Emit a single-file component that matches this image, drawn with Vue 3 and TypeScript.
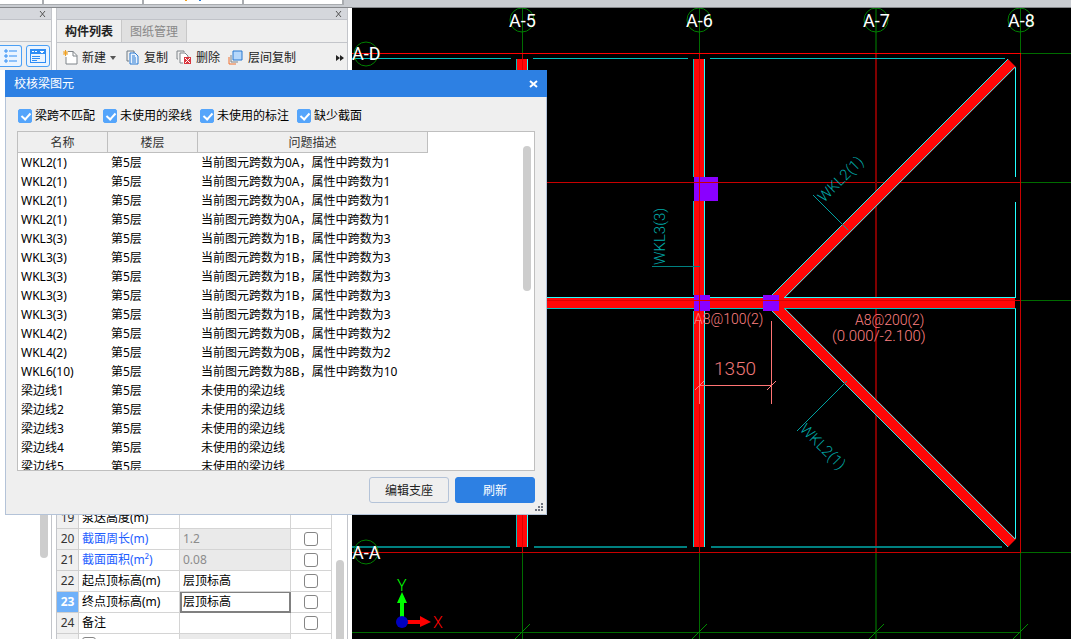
<script setup lang="ts">
import { ref } from 'vue'

interface Filter { label: string; on: boolean }
interface Issue { name: string; floor: string; desc: string }
interface Prop { no: number; name: string; value: string; link?: boolean; readonly?: boolean; tick?: boolean; active?: boolean }
type Bar = [x: number, y: number, w: number, h: number, tone: string]

const filters = ref<Filter[]>([
  { label: '梁跨不匹配', on: true },
  { label: '未使用的梁线', on: true },
  { label: '未使用的标注', on: true },
  { label: '缺少截面', on: true },
])

const span = (name: string, drawn: string, prop: number): Issue => ({
  name, floor: '第5层', desc: `当前图元跨数为${drawn}，属性中跨数为${prop}`,
})
const issues: Issue[] = [
  ...Array.from({ length: 4 }, () => span('WKL2(1)', '0A', 1)),
  ...Array.from({ length: 5 }, () => span('WKL3(3)', '1B', 3)),
  ...Array.from({ length: 2 }, () => span('WKL4(2)', '0B', 2)),
  span('WKL6(10)', '8B', 10),
  ...[1, 2, 3, 4, 5].map((n) => ({ name: `梁边线${n}`, floor: '第5层', desc: '未使用的梁边线' })),
]

const props = ref<Prop[]>([
  { no: 19, name: '泵送高度(m)', value: '' },
  { no: 20, name: '截面周长(m)', value: '1.2', link: true, readonly: true, tick: true },
  { no: 21, name: '截面面积(m²)', value: '0.08', link: true, readonly: true, tick: true },
  { no: 22, name: '起点顶标高(m)', value: '层顶标高', tick: true },
  { no: 23, name: '终点顶标高(m)', value: '层顶标高', tick: true, active: true },
  { no: 24, name: '备注', value: '', tick: true },
])

// Axis grid: green outside the building outline, red inside it
const grid: Bar[] = [
  [352, 53, 669, 1, 'red'], [1021, 53, 2000, 1, 'green'],
  [352, 182, 669, 1, 'brick'], [1021, 182, 2000, 1, 'green'],
  [1021, 300, 2000, 1, 'green'], [1015, 300, 6, 1, 'brick'],
  [352, 552, 669, 1, 'brick'], [1021, 552, 2000, 1, 'green'],
  [352, 632, 669, 1, 'green'],
  [522, 8, 1, 45, 'green'], [522, 54, 1, 498, 'brick'], [522, 553, 1, 2000, 'green'],
  [699, 8, 1, 45, 'green'], [699, 54, 1, 498, 'brick'], [699, 553, 1, 2000, 'green'],
  [875, 8, 2, 45, 'moss'], [875, 54, 2, 498, 'maroon'], [875, 553, 2, 2000, 'moss'],
  [1020, 8, 1, 45, 'green'], [1020, 54, 1, 498, 'brick'], [1020, 553, 1, 2000, 'green'],
]

const edges: Bar[] = [
  [352, 58, 159, 1, 'aqua'], [533, 58, 155, 1, 'aqua'], [710, 58, 295, 1, 'aqua'],
  [352, 546, 158, 2, 'teal'], [534, 546, 153, 2, 'teal'], [711, 546, 291, 2, 'teal'],
  [1015, 67, 1, 110, 'cyan'], [1015, 202, 1, 95, 'cyan'], [1015, 309, 1, 230, 'cyan'],
]

const beams: Bar[] = [
  [516, 59, 1, 488, 'aqua'], [517, 59, 10, 488, 'beam'], [527, 59, 1, 488, 'cyan'],
  [693, 59, 1, 118, 'aqua'], [704, 59, 1, 118, 'cyan'],
  [693, 201, 1, 94, 'aqua'], [704, 201, 1, 94, 'cyan'],
  [693, 311, 1, 236, 'aqua'], [704, 311, 1, 236, 'cyan'],
  [694, 59, 10, 488, 'beam'],
  [546, 297, 148, 1, 'cyan'], [710, 297, 53, 1, 'cyan'], [784, 297, 232, 1, 'cyan'],
  [546, 308, 148, 1, 'aqua'], [710, 308, 53, 1, 'aqua'], [784, 308, 232, 1, 'aqua'],
  [546, 298, 469, 10, 'beam'],
]

const marks: Bar[] = [
  [694, 177, 24, 24, 'violet'], [694, 295, 16, 16, 'violet'], [763, 295, 16, 16, 'violet'],
  [522, 59, 1, 488, 'seam'], [699, 59, 1, 488, 'seam'], [546, 300, 469, 1, 'seam'],
  [694, 182, 24, 1, 'brick'],
  [652, 266, 48, 1, 'teal'],
  [699, 321, 1, 83, 'salmon'], [771, 321, 1, 83, 'salmon'], [699, 385, 73, 1, 'salmon'],
]

const bubbles = [
  { x: 522, y: 20, tx: 509, ty: 27, t: 'A-5' },
  { x: 699, y: 20, tx: 686, ty: 27, t: 'A-6' },
  { x: 876, y: 20, tx: 863, ty: 27, t: 'A-7' },
  { x: 1020, y: 20, tx: 1008, ty: 27, t: 'A-8' },
  { x: 366, y: 54, tx: 352, ty: 60, t: 'A-D' },
  { x: 366, y: 552, tx: 352, ty: 559, t: 'A-A' },
]
const slashes = [522, 699, 876, 1020]
</script>

<template>
  <div class="app">
    <header class="strip">
      <span class="seg first"></span>
      <span class="seg"></span>
      <span class="seg"><i class="dot orange"></i><i class="dot blue"></i></span>
      <span class="seg"></span>
    </header>

    <div class="work">
      <aside class="pane nav">
        <div class="cap"><button class="x" aria-label="×"><svg width="7" height="6" viewBox="0 0 7 6"><path d="M1 0l5 6M6 0L1 6" stroke="#555" /></svg></button></div>
        <div class="blank"></div>
        <div class="modes">
          <button class="mode cut"><svg width="14" height="16" viewBox="0 0 14 16"><g fill="none" stroke="#2f8df5"><path d="M1 2h2v2H1zM1 7h2v2H1zM1 12h2v2H1z" /><path d="M5 3h8M5 8h8M5 13h8" /></g></svg></button>
          <button class="mode"><svg width="16" height="14" viewBox="0 0 16 14"><path d="M0 0h16v14H0z" fill="#2f8df5" /><path d="M1 5h14v8H1z" fill="#eaf4ff" /><path d="M2 2h2v1H2zM5 2h2v1H5zM10 2h4v1h-1v1h-2V3h-1z" fill="#fff" /><path d="M2 7h8v1H2zM2 9h8v1H2zM2 11h5v1H2z" fill="#2f8df5" /></svg></button>
        </div>
        <div class="tree"><span class="thumb"></span></div>
      </aside>

      <aside class="pane parts">
        <div class="cap"><button class="x" aria-label="×"><svg width="7" height="6" viewBox="0 0 7 6"><path d="M1 0l5 6M6 0L1 6" stroke="#555" /></svg></button></div>
        <nav class="tabs">
          <button class="tab on">构件列表</button>
          <button class="tab">图纸管理</button>
        </nav>
        <div class="tools">
          <button class="tool new">
            <svg width="15" height="15" viewBox="0 0 15 15"><path d="M5 1.500h5l4 4v8.500H3V7" fill="#fff" stroke="#7f8489" /><path d="M10 1v5h4" fill="none" stroke="#7f8489" /><path d="M0 3h5M2.500 0v6M0.500 1l4 4M4.500 1l-4 4" stroke="#f0a020" /></svg>
            <span>新建</span>
            <svg width="6" height="4" viewBox="0 0 6 4"><path d="M0 0h6L3 4z" fill="#555" /></svg>
          </button>
          <button class="tool">
            <svg width="13" height="15" viewBox="0 0 13 15"><path d="M3 11H1V1h7v2" fill="none" stroke="#6f7a85" /><path d="M4 3h5l3 3v8H4z" fill="#e8f3ff" stroke="#2878d0" /><path d="M6 6h3M6 8h4M6 10h4M6 12h4" stroke="#2878d0" /></svg>
            <span>复制</span>
          </button>
          <button class="tool">
            <svg width="15" height="15" viewBox="0 0 15 15"><path d="M2 9H1V1h7v1" fill="none" stroke="#7f8489" /><path d="M7 13H4V3h5l3 3v1" fill="#fff" stroke="#7f8489" /><path d="M8 7h7v7H8z" fill="#d9363e" /><path d="M9 8l5 5M14 8l-5 5" stroke="#fff" /></svg>
            <span>删除</span>
          </button>
          <button class="tool layer">
            <svg width="15" height="15" viewBox="0 0 15 15"><path d="M5 1h9v9H5z" fill="#b5d7fb" stroke="#2878d0" /><path d="M3 5v7h7" fill="none" stroke="#7f8489" /><path d="M1 7v7h7" fill="none" stroke="#f07030" /></svg>
            <span>层间复制</span>
          </button>
          <button class="more" aria-label="»"><svg width="8" height="6" viewBox="0 0 8 6"><path d="M0 0l4 3-4 3zM4 0l4 3-4 3z" fill="#222" /></svg></button>
        </div>
        <div class="list"></div>
        <div class="sheet">
          <table class="props">
            <colgroup><col class="p1" /><col class="p2" /><col class="p3" /><col class="p4" /></colgroup>
            <tbody>
              <tr v-for="p in props" :key="p.no" :class="{ active: p.active }">
                <th scope="row">{{ p.no }}</th>
                <td :id="'prop-' + p.no" :class="{ link: p.link }">{{ p.name }}</td>
                <td class="val" :class="{ ro: p.readonly }">
                  <input v-model="p.value" type="text" :readonly="p.readonly" :aria-labelledby="'prop-' + p.no" />
                </td>
                <td class="tick"><input v-if="p.tick" type="checkbox" :aria-labelledby="'prop-' + p.no" /></td>
              </tr>
              <tr>
                <th></th>
                <td class="sub"><input type="checkbox" aria-label="+" /></td>
                <td class="val ro"></td>
                <td></td>
              </tr>
            </tbody>
          </table>
          <span class="thumb"></span>
        </div>
      </aside>

      <main class="canvas">
        <svg class="cad" viewBox="352 8 719 631" preserveAspectRatio="xMinYMin slice">
          <rect v-for="(b, i) in grid" :key="'g' + i" :x="b[0]" :y="b[1]" :width="b[2]" :height="b[3]" :class="b[4]" />
          <rect v-for="(b, i) in edges" :key="'e' + i" :x="b[0]" :y="b[1]" :width="b[2]" :height="b[3]" :class="b[4]" />
          <path class="beam" d="M772 295L1008 59L1016 67L784 299L772 303Z" />
          <path class="beam" d="M772 311L1008 547L1016 539L784 307L772 303Z" />
          <path class="edge" d="M772 295L1008 59M784 298L1015 67M772 311L1008 547M784 308L1015 539" />
          <rect v-for="(b, i) in beams" :key="'b' + i" :x="b[0]" :y="b[1]" :width="b[2]" :height="b[3]" :class="b[4]" />
          <rect v-for="(b, i) in marks" :key="'m' + i" :x="b[0]" :y="b[1]" :width="b[2]" :height="b[3]" :class="b[4]" />
          <path class="dim" d="M695 390L704 381M767 390L776 381" />
          <path class="leader" d="M813 195L848 230M797 431L847 381" />
          <path v-for="x in slashes" :key="x" class="slash" :d="`M${x - 8} 640l16 -16`" />
          <g v-for="b in bubbles" :key="b.t">
            <circle :cx="b.x" :cy="b.y" r="12" class="bubble" />
            <text :x="b.tx" :y="b.ty" class="axis">{{ b.t }}</text>
          </g>
          <text class="tag" transform="translate(665 265) rotate(-90)">WKL3(3)</text>
          <text class="tag" transform="translate(824 203) rotate(-45)">WKL2(1)</text>
          <text class="tag" transform="translate(799 430) rotate(45)">WKL2(1)</text>
          <text class="note" x="694" y="324">A8@100(2)</text>
          <text class="note" x="855" y="325">A8@200(2)</text>
          <text class="note wide" x="832" y="341">(0.000/-2.100)</text>
          <text class="size" x="714" y="375">1350</text>
          <path d="M400 617V603H397L402 592L407 603H404V617Z" fill="#0f0" />
          <path d="M407 620H420V616L431 622L420 627V624H407Z" fill="#f00" />
          <circle cx="402" cy="622" r="6" fill="#0000c0" />
          <text class="ucs y" x="397" y="591">Y</text>
          <text class="ucs x" x="433" y="628">X</text>
        </svg>
      </main>
    </div>

    <section class="dialog" role="dialog" aria-labelledby="dlg-title">
      <div class="title">
        <span id="dlg-title">校核梁图元</span>
        <button class="close" aria-label="×"><svg width="9" height="8" viewBox="0 0 9 8"><path d="M1 1l7 6M8 1L1 7" stroke="#fff" stroke-width="2" /></svg></button>
      </div>
      <div class="body">
        <div class="filters">
          <label v-for="f in filters" :key="f.label"><input v-model="f.on" type="checkbox" />{{ f.label }}</label>
        </div>
        <div class="frame">
          <table class="issues">
            <colgroup><col class="c1" /><col class="c2" /><col class="c3" /></colgroup>
            <thead><tr><th>名称</th><th>楼层</th><th>问题描述</th></tr></thead>
            <tbody>
              <tr v-for="(r, i) in issues" :key="i"><td>{{ r.name }}</td><td>{{ r.floor }}</td><td>{{ r.desc }}</td></tr>
            </tbody>
          </table>
          <span class="thumb"></span>
        </div>
        <div class="actions">
          <button>编辑支座</button>
          <button class="primary">刷新</button>
        </div>
      </div>
      <svg class="grip" width="8" height="8" viewBox="0 0 8 8"><path d="M6 0h2v2H6zM3 3h2v2H3zM6 3h2v2H6zM0 6h2v2H0zM3 6h2v2H3zM6 6h2v2H6z" fill="#6f7480" /></svg>
    </section>
  </div>
</template>

<style>
html, body { height: 100%; }
body { margin: 0; overflow: hidden; }
</style>

<style scoped>
* { box-sizing: border-box; }
.app {
  position: relative; display: flex; flex-direction: column; height: 100vh; overflow: hidden;
  background: #fff; color: #000; font: 12px/18px "Noto Sans", "Noto Sans CJK SC", sans-serif;
}
button { font: inherit; color: inherit; background: none; border: 0; padding: 0; margin: 0; white-space: nowrap; }
svg { display: block; flex: none; }

.strip { display: flex; flex: 0 0 8px; align-items: flex-start; background: #c9ccd1; border-bottom: 1px solid #85878b; }
.seg { display: flex; justify-content: center; gap: 12px; width: 100px; height: 5px; background: #fff; border-right: 2px solid #a9acb0; border-bottom: 1px solid #a9acb0; }
.seg.first { width: 44px; }
.dot { width: 2px; height: 1px; }
.dot.orange { background: #f0a020; }
.dot.blue { background: #2878d0; }

.work { display: flex; flex: 1; min-height: 0; }
.pane { display: flex; flex-direction: column; flex: none; border-right: 1px solid #c3c5ca; }
.nav { width: 52px; margin-right: 4px; }
.parts { width: 292px; margin-right: 4px; border-left: 1px solid #c3c5ca; }
.cap { display: flex; flex: 0 0 12px; align-items: center; justify-content: flex-end; padding-top: 1px; padding-right: 5px; background: #d5d7dc; border-bottom: 1px solid #c0c2c8; }
.blank { flex: 0 0 22px; background: #efefef; border-bottom: 1px solid #c3c5ca; }
.modes { display: flex; flex: 0 0 28px; align-items: center; gap: 4px; padding-right: 1px; background: #efefef; overflow: hidden; }
.mode { display: flex; align-items: center; justify-content: center; width: 24px; height: 22px; background: #eaf4ff; border: 1px solid #4a9ff5; border-radius: 3px; }
.mode.cut { width: 22px; border-left: 0; border-radius: 0 3px 3px 0; }
.thumb { display: block; flex: none; width: 8px; border-radius: 4px; background: #cdcdcd; }
.tree { display: flex; flex: 1; justify-content: flex-end; padding-right: 3px; }
.tree .thumb { height: 488px; }

.tabs { display: flex; flex: 0 0 23px; background: #efefef; border-bottom: 1px solid #c3c5ca; }
.tab { width: 65px; padding-top: 2px; color: #888; background: #e0e0e0; border-right: 1px solid #c8c8c8; }
.tab.on { color: #222; font-weight: 700; background: #efefef; }
.tools { display: flex; flex: 0 0 27px; align-items: center; padding: 2px 3px 0 6px; background: #efefef; color: #222; }
.tool { display: flex; align-items: center; gap: 5px; margin-right: 8px; }
.new { gap: 4px; margin-right: 10px; }
.layer { margin-right: auto; }
.list { flex: 0 0 438px; }
.sheet { display: flex; flex: 1; align-items: flex-start; min-height: 0; gap: 4px; overflow: hidden; }
.sheet .thumb { height: 120px; margin-top: 52px; }

table { border-collapse: separate; border-spacing: 0; table-layout: fixed; flex: none; }
.props { width: 275px; }
.p1 { width: 22px; } .p2 { width: 101px; } .p3 { width: 111px; } .p4 { width: 41px; }
.props th, .props td { height: 21px; padding: 0 0 0 3px; text-align: left; border: 0 solid #d4d4d4; border-width: 0 1px 1px 0; white-space: nowrap; line-height: 20px; }
.props th { padding: 0; text-align: center; color: #333; font-weight: 400; background: #f0f0f0; border-color: #cfcfcf; }
.props .active th { color: #fff; font-weight: 700; background: #6fb1fa; }
.props .link { color: #1e5eff; }
.props .val { padding: 0; }
.props .ro { background: #eaeaea; }
.val input { display: block; width: 100%; height: 20px; padding: 0 3px; border: 0; outline: 0; background: none; color: #000; font: inherit; }
.ro input { color: #8c8c8c; }
.active .val { border-color: #808080; }
.active .val input { padding: 0 1px; border: 2px solid #808080; border-width: 1px 1px 1px 2px; }
.props .tick { padding: 0; text-align: center; }
.props .sub { vertical-align: top; }
input[type="checkbox"] { appearance: none; position: relative; display: block; flex: none; width: 14px; height: 14px; margin: 0; background: #fff; border: 1px solid #858585; border-radius: 3px; }
.tick input[type="checkbox"] { margin: 0 auto; }
.sub input[type="checkbox"] { margin-top: 3px; }
.filters input[type="checkbox"] { border-radius: 2px; }
input[type="checkbox"]:checked { background: #55a5fb; border-color: #55a5fb; }
input[type="checkbox"]:checked::after { content: ""; position: absolute; left: 4px; top: 1px; width: 4px; height: 7px; border: solid #fff; border-width: 0 2px 2px 0; transform: rotate(42deg); }

.canvas { flex: 1; min-width: 0; overflow: hidden; background: #000; }
.cad { width: 100%; height: 100%; font-family: Roboto, sans-serif; font-weight: 300; }
.cad rect { shape-rendering: crispEdges; }
.red { fill: #f00; } .brick { fill: #c80000; } .maroon { fill: #800000; } .green { fill: #006c00; } .moss { fill: #004400; }
.aqua { fill: #00c0c0; } .cyan { fill: #2ff; } .teal { fill: #008080; } .beam { fill: #ff0707; } .seam { fill: #dc0000; }
.violet { fill: #8a00ff; } .salmon { fill: #ff7474; }
.edge { fill: none; stroke: #2ee; shape-rendering: crispEdges; }
.dim { stroke: #ff8080; }
.leader { stroke: #00a0a0; }
.slash { stroke: #008c00; }
.bubble { fill: none; stroke: #008000; }
.axis { fill: #fff; font-size: 18px; font-weight: 400; }
.tag { fill: #00a8a8; font-size: 15px; }
.note { fill: #ff8080; font-size: 14px; }
.wide { font-size: 15px; }
.size { fill: #f07878; font-size: 19px; }
.ucs { font-size: 16px; }
.ucs.y { fill: #0f0; } .ucs.x { fill: #f00; }

.dialog { position: absolute; left: 5px; top: 70px; width: 542px; color: #000; background: #efefef; border: 1px solid #b4c3d8; border-top: 0; }
.title { display: flex; align-items: center; justify-content: space-between; height: 27px; margin: 0 -1px; padding: 1px 9px 0; color: #fff; background: #2d80e3; }
.body { padding: 11px; }
.filters { display: flex; gap: 8px; height: 16px; margin: 0 1px 7px; align-items: center; }
.filters label { display: flex; align-items: center; gap: 3px; white-space: nowrap; line-height: 20px; }
.frame { display: flex; justify-content: space-between; height: 340px; padding-right: 3px; overflow: hidden; background: #fff; border: 1px solid #bfbfbf; }
.frame .thumb { height: 145px; margin-top: 14px; }
.issues { width: 410px; align-self: flex-start; }
.c1 { width: 90px; } .c2 { width: 90px; } .c3 { width: 230px; }
.issues th { height: 21px; padding: 2px 0 0; color: #333; font-weight: 400; background: #efefef; border: 0 solid #bfbfbf; border-width: 0 1px 1px 0; }
.issues td { height: 19px; padding: 0 0 0 3px; white-space: nowrap; }
.actions { display: flex; justify-content: flex-end; gap: 6px; margin-top: 6px; }
.actions button { width: 80px; height: 26px; padding-top: 1px; color: #222; border: 1px solid #b4c3d8; border-radius: 3px; }
.actions .primary { color: #fff; background: #2d80e3; border-color: #2d80e3; }
.grip { position: absolute; right: 3px; bottom: 3px; }
</style>
